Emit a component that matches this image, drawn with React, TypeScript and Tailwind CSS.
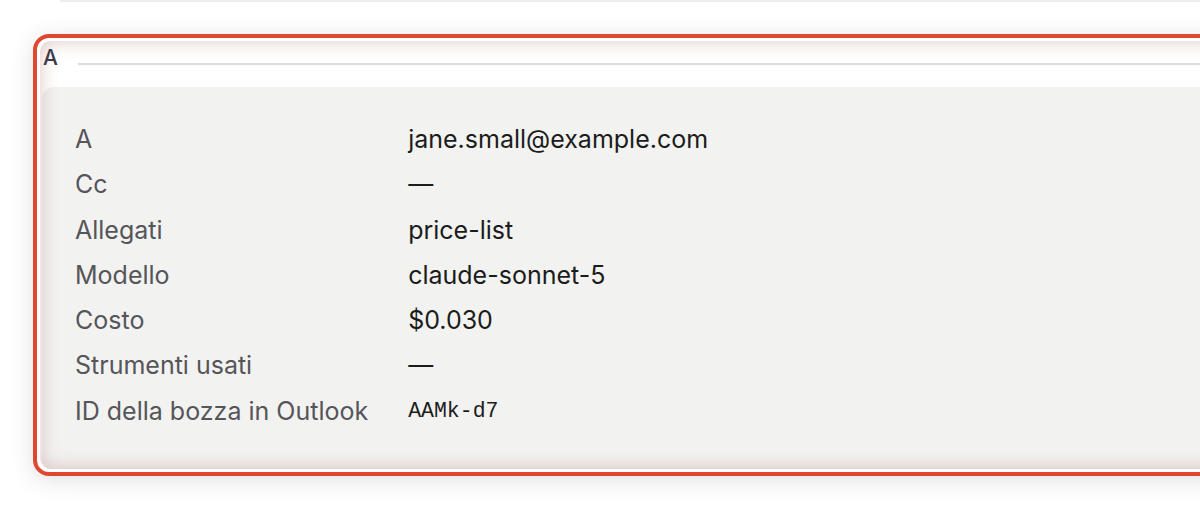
import React from 'react';

const rows: { label: string; value: string; mono?: boolean }[] = [
  { label: 'A', value: 'jane.small@example.com' },
  { label: 'Cc', value: '—' },
  { label: 'Allegati', value: 'price-list' },
  { label: 'Modello', value: 'claude-sonnet-5' },
  { label: 'Costo', value: '$0.030' },
  { label: 'Strumenti usati', value: '—' },
  { label: 'ID della bozza in Outlook', value: 'AAMk-d7', mono: true },
];

const App: React.FC = () => {
  return <div className="w-[1200px] h-[506px] overflow-hidden bg-white font-['Inter','Noto_Sans',sans-serif]">
      {/* tail of the element above */}
      <div className="ml-[60px] h-[2px] bg-[#ededed]" />
      <div className="pl-[33px] pt-[32px]">
        <div className="w-[1220px] rounded-[16px] border-4 border-[#e0472e] bg-white p-[3px] shadow-[0_4px_22px_rgba(60,60,70,0.16)]">
          <div className="relative rounded-[11px] bg-white">
            <div className="flex items-start h-[46px] pl-[3px] pt-[6px]">
              <span className="text-[21px] leading-[22px] font-medium text-[#3a3a48]">A</span>
              <div className="ml-[20px] mt-[16px] flex-1 border-t-2 border-[#dcdcdc] border-b border-b-[#fafafa]" />
            </div>
            <div className="ml-[2px] rounded-tl-[12px] rounded-bl-[10px] bg-[#f2f2f0] pl-[33px] pt-[30px] pb-[35px]">
              <div className="grid grid-cols-[auto_1fr] gap-x-[40px]">
                {rows.map(r => <React.Fragment key={r.label}>
                    <div className="text-[25px] leading-[45.3px] text-[#55555a]">{r.label}</div>
                    {r.mono ? <div className="text-[21.5px] leading-[45.3px] text-[#1c1c1c] font-['Liberation_Mono',monospace]">{r.value}</div> : <div className="text-[25px] leading-[45.3px] text-[#1c1c1c]">{r.value}</div>}
                  </React.Fragment>)}
              </div>
            </div>
            <div className="pointer-events-none absolute inset-0 rounded-[11px] shadow-[inset_0_0_18px_rgba(150,80,70,0.32)]" />
          </div>
        </div>
      </div>
    </div>;
};

export default App;
